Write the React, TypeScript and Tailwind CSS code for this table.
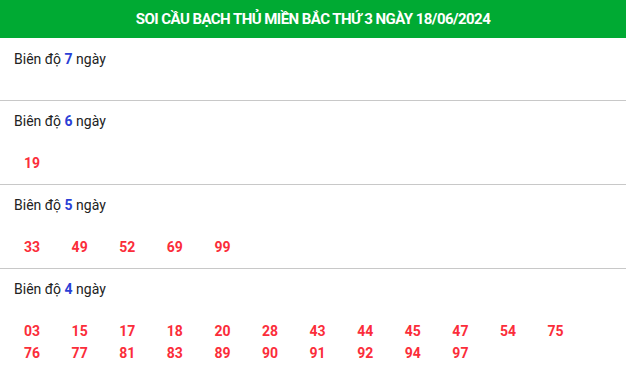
import React from "react";

const sections: { n: number; nums: string[] }[] = [
  { n: 7, nums: [] },
  { n: 6, nums: ["19"] },
  { n: 5, nums: ["33", "49", "52", "69", "99"] },
  {
    n: 4,
    nums: [
      "03", "15", "17", "18", "20", "28", "43", "44", "45", "47", "54", "75",
      "76", "77", "81", "83", "89", "90", "91", "92", "94", "97",
    ],
  },
];

export default function App() {
  return (
    <div
      className="w-[626px] h-[372px] overflow-hidden bg-white"
      style={{ fontFamily: "Roboto, 'Liberation Sans', sans-serif" }}
    >
      <div className="h-[38px] bg-[#00aa33] flex items-center justify-center">
        <h1 className="text-white font-bold text-[15px] tracking-[-0.55px] leading-none">
          SOI CẦU BẠCH THỦ MIỀN BẮC THỨ 3 NGÀY 18/06/2024
        </h1>
      </div>
      {sections.map((s, i) => (
        <div
          key={s.n}
          className={i > 0 ? "border-t border-[#c8c8c8] pt-[10px] pb-[10px]" : "pt-[11px] pb-[11px]"}
        >
          <div className="h-[20px] leading-[20px] pl-[14px] text-[14px] text-[#222]">
            Biên độ <span className="font-bold text-[#2b3fd6]">{s.n}</span> ngày
          </div>
          <div className={`${i > 0 ? "mt-[21px]" : "mt-[20px]"} pl-[24px] flex flex-wrap`}>
            {s.nums.map((x) => (
              <span
                key={x}
                className="w-[47.6px] h-[22px] leading-[22px] text-[14px] font-bold text-[#fb2d3a]"
              >
                {x}
              </span>
            ))}
          </div>
        </div>
      ))}
    </div>
  );
}
